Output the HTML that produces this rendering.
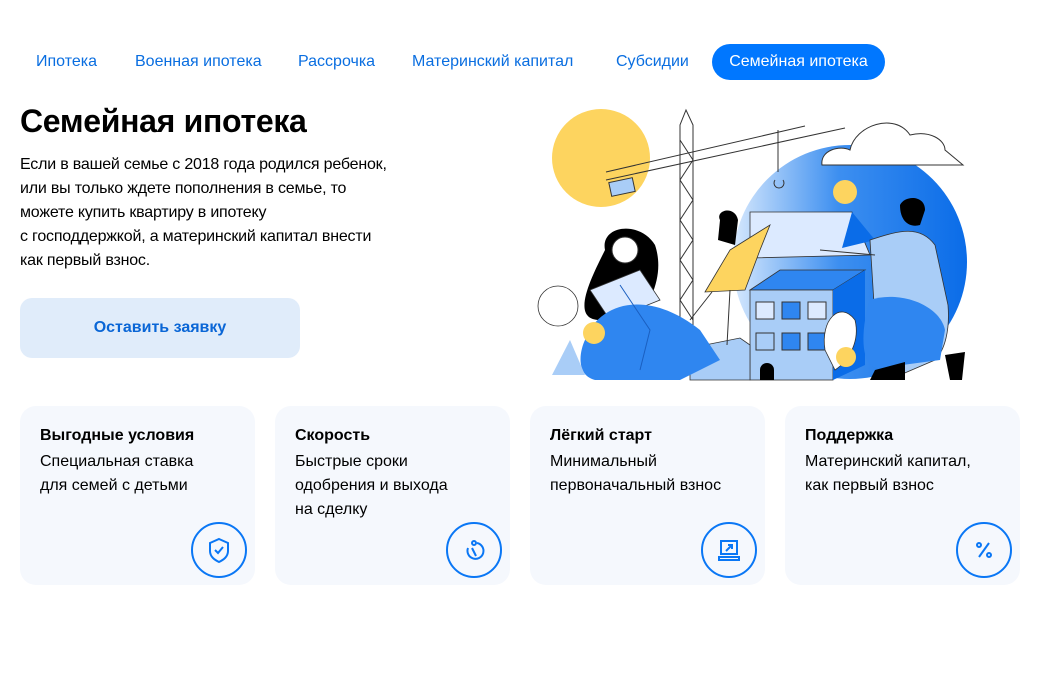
<!DOCTYPE html>
<html><head><meta charset="utf-8"><style>
*{margin:0;padding:0;box-sizing:border-box}
body{width:1040px;height:700px;background:#fff;font-family:"Liberation Sans",sans-serif;color:#000;position:relative;overflow:hidden}
.tab{position:absolute;top:44px;height:36px;line-height:36px;font-size:16px;color:#0a6ee0}
.tab.act{background:#0077ff;color:#fff;border-radius:18px;padding:0 16px}
h1{position:absolute;left:20px;top:103px;font-size:32px;font-weight:bold;letter-spacing:-0.3px}
.p{position:absolute;left:20px;top:153px;font-size:16px;line-height:24px;width:420px;letter-spacing:-0.2px}
.btn{position:absolute;left:20px;top:298px;width:280px;height:60px;border-radius:12px;background:#e0ecfa;color:#0a66d6;font-weight:bold;font-size:16px;text-align:center;line-height:60px}
.card{position:absolute;top:406px;width:235px;height:179px;border-radius:16px;background:#f5f8fd;padding:20px}
.card b{display:block;font-size:16px;margin-bottom:4px;line-height:20px}
.card div{font-size:16px;line-height:24px}
.ic{position:absolute;right:8px;bottom:7px;width:56px;height:56px;border:2px solid #0a77f5;border-radius:50%}
</style></head><body>
<div class="tab" style="left:36px">Ипотека</div>
<div class="tab" style="left:135px">Военная ипотека</div>
<div class="tab" style="left:298px">Рассрочка</div>
<div class="tab" style="left:412px">Материнский капитал</div>
<div class="tab" style="left:616px">Субсидии</div>
<div class="tab act" style="left:712px;width:173px;text-align:center;padding:0">Семейная ипотека</div>
<h1>Семейная ипотека</h1>
<div class="p">Если в вашей семье с 2018 года родился ребенок,<br>или вы только ждете пополнения в семье, то<br>можете купить квартиру в ипотеку<br>с господдержкой, а материнский капитал внести<br>как первый взнос.</div>
<div class="btn">Оставить заявку</div>

<svg style="position:absolute;left:0;top:0" width="1040" height="400">
<defs><linearGradient id="g" x1="0" x2="1"><stop offset="0" stop-color="#d6e8fd"/><stop offset=".45" stop-color="#3d8ff0"/><stop offset="1" stop-color="#0a6ce8"/></linearGradient></defs>
<circle cx="601" cy="158" r="49" fill="#fdd45f"/>
<circle cx="850" cy="262" r="117" fill="url(#g)"/>
<path d="M822 165 C820 150 840 145 850 150 C855 125 895 112 910 135 C930 130 945 140 945 150 L963 165 Z" fill="#fff" stroke="#333" stroke-width="1"/>
<g stroke="#333" stroke-width="1" fill="none">
<path d="M680 330 L680 125 L686 110 L693 125 L693 330"/>
<path d="M606 172 L805 126 M606 180 L845 128 M680 140 L693 160 L680 180 L693 200 L680 220 L693 240 L680 260 L693 280 L680 300 L693 320"/>
<path d="M778 130 L778 172 M775 180 a5 5 0 1 0 8 0"/>
</g>
<rect x="610" y="180" width="24" height="14" fill="#a9cdf7" stroke="#333" transform="rotate(-12 622 187)"/>
<circle cx="845" cy="192" r="12" fill="#fdd45f"/>
<polygon points="750,212 852,212 870,255 750,258" fill="#dceaff" stroke="#333" stroke-width=".8"/>
<polygon points="852,212 875,240 842,248" fill="#0a6ce8"/>
<polygon points="750,290 780,270 865,270 833,290" fill="#2f86f0" stroke="#333" stroke-width=".8"/>
<rect x="750" y="290" width="83" height="90" fill="#a9cdf7" stroke="#333" stroke-width=".8"/>
<polygon points="833,290 865,270 865,365 833,380" fill="#0a6ce8"/>
<rect x="756" y="302" width="18" height="17" fill="#dceaff" stroke="#333"/><rect x="782" y="302" width="18" height="17" fill="#2f86f0" stroke="#333"/><rect x="808" y="302" width="18" height="17" fill="#dceaff" stroke="#333"/>
<rect x="756" y="333" width="18" height="17" fill="#a9cdf7" stroke="#333"/><rect x="782" y="333" width="18" height="17" fill="#2f86f0" stroke="#333"/><rect x="808" y="333" width="18" height="17" fill="#2f86f0" stroke="#333"/>
<path d="M760 380 v-10 a7 7 0 0 1 14 0 v10Z" fill="#000"/>
<polygon points="690,348 740,338 750,345 750,380 690,380" fill="#a9cdf7" stroke="#333" stroke-width=".8"/>
<path d="M605 250 C600 225 640 220 655 245 C665 275 650 300 640 320 L600 320 C570 320 590 280 605 250Z" fill="#000"/>
<circle cx="625" cy="250" r="13" fill="#fff" stroke="#333"/>
<path d="M590 290 L640 270 L660 300 L610 320Z" fill="#dceaff" stroke="#333" stroke-width=".8"/>
<path d="M585 340 C600 300 650 290 700 330 L720 360 L680 380 L595 380 C575 375 580 350 585 340Z" fill="#2f86f0"/>
<path d="M620 285 L650 330 L640 370" stroke="#1a5fc0" fill="none"/>
<path d="M730 250 L770 225 L760 250 L745 290 L705 292 Z" fill="#fdd45f" stroke="#333" stroke-width=".8"/>
<path d="M720 220 C715 210 735 205 738 220 L735 245 L718 240Z" fill="#000"/>
<path d="M730 290 L727 345 M712 292 L690 320" stroke="#333" fill="none"/>
<path d="M870 240 C900 230 920 225 935 245 L948 305 C950 330 945 350 935 360 L900 375 C880 360 870 340 875 320Z" fill="#a9cdf7" stroke="#333" stroke-width=".8"/>
<path d="M900 205 C905 195 925 195 925 210 L920 225 C910 228 900 222 900 205Z" fill="#000"/>
<path d="M870 300 C900 290 940 305 945 330 L940 360 L880 368 C860 370 860 330 870 300Z" fill="#2f86f0"/>
<path d="M820 250 L875 255" stroke="#333"/>
<path d="M875 370 L905 362 L905 380 L870 380Z M945 355 L965 352 L962 380 L950 380Z" fill="#000"/>
<path d="M855 320 C840 300 820 320 825 350 L835 370 C850 360 860 340 855 320Z" fill="#fff" stroke="#333" stroke-width=".8"/>
<circle cx="846" cy="357" r="10" fill="#fdd45f"/>
<circle cx="594" cy="333" r="11" fill="#fdd45f"/>
<circle cx="558" cy="306" r="20" fill="#fff" stroke="#333" stroke-width=".8"/>
<path d="M552 375 L570 340 L585 375Z" fill="#a9cdf7"/>
</svg>

<div class="card" style="left:20px"><b>Выгодные условия</b><div>Специальная ставка<br>для семей с детьми</div>
<div class="ic"><svg width="52" height="52" viewBox="0 0 52 52" fill="none" stroke="#0a77f5" stroke-width="2"><path d="M26 15 L35 19 V27 C35 33 30 36 26 38 C22 36 17 33 17 27 V19Z"/><path d="M22 26 L25 29 L30 23"/></svg></div></div>
<div class="card" style="left:275px"><b>Скорость</b><div>Быстрые сроки<br>одобрения и выхода<br>на сделку</div>
<div class="ic"><svg width="52" height="52" viewBox="0 0 52 52" fill="none" stroke="#0a77f5" stroke-width="2"><path d="M29 19 a8 8 0 1 1 -9 5"/><circle cx="26" cy="19" r="2"/><path d="M24 24 L28 32"/></svg></div></div>
<div class="card" style="left:530px"><b>Лёгкий старт</b><div>Минимальный<br>первоначальный взнос</div>
<div class="ic"><svg width="52" height="52" viewBox="0 0 52 52" fill="none" stroke="#0a77f5" stroke-width="2"><rect x="18" y="17" width="16" height="13"/><rect x="16" y="33" width="20" height="3"/><path d="M23 27 L29 21 M25 21 H29 V25"/></svg></div></div>
<div class="card" style="left:785px"><b>Поддержка</b><div>Материнский капитал,<br>как первый взнос</div>
<div class="ic"><svg width="52" height="52" viewBox="0 0 52 52" fill="none" stroke="#0a77f5" stroke-width="2"><path d="M31 19 L21 33"/><circle cx="21" cy="21" r="2"/><circle cx="31" cy="31" r="2"/></svg></div></div>
</body></html>
